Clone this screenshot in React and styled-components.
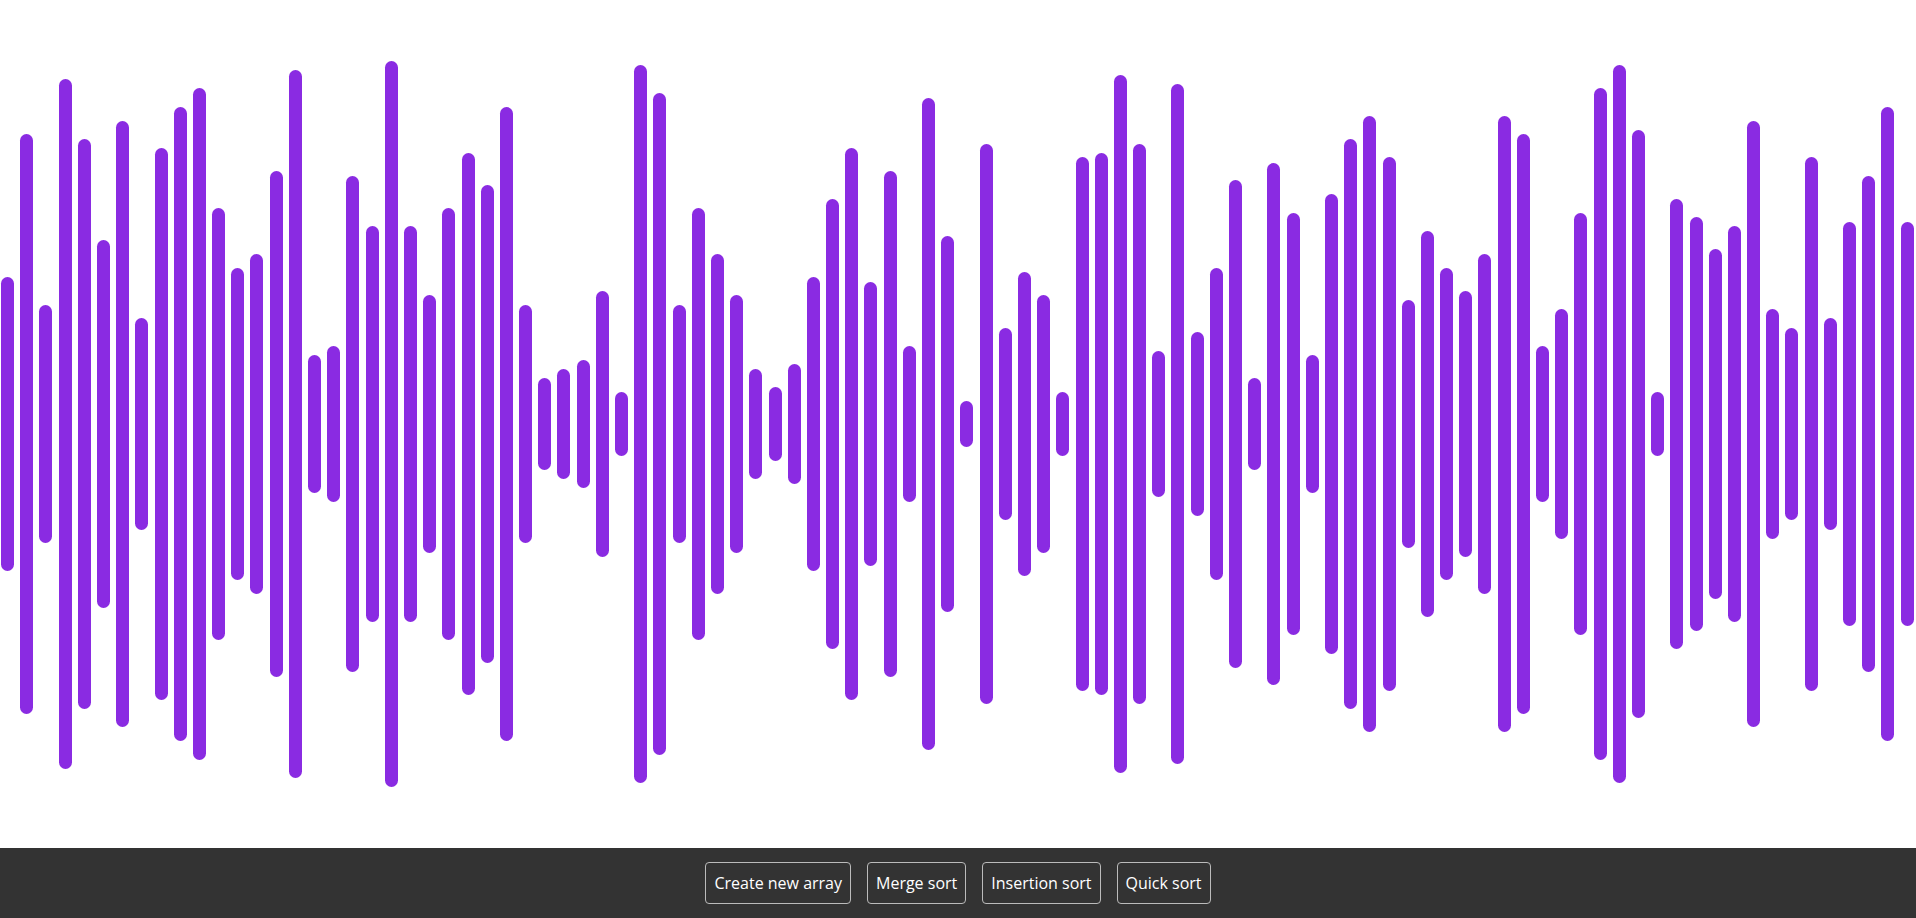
import React from 'react';
import styled, { createGlobalStyle } from 'styled-components';

const GlobalStyle = createGlobalStyle`
  html, body {
    margin: 0;
    padding: 0;
    background: #fff;
  }
  body {
    font-family: "Open Sans", "Liberation Sans", sans-serif;
  }
`;

// top edge of each bar (px from the top of the page); bars are centred at 424
const tops = [
  277, 134, 305, 79, 139, 240, 121, 318, 148, 107,
  88, 208, 268, 254, 171, 70, 355, 346, 176, 226,
  61, 226, 295, 208, 153, 185, 107, 305, 378, 369,
  360, 291, 392, 65, 93, 305, 208, 254, 295, 369,
  387, 364, 277, 199, 148, 282, 171, 346, 98, 236,
  401, 144, 328, 272, 295, 392, 157, 153, 75, 144,
  351, 84, 332, 268, 180, 378, 163, 213, 355, 194,
  139, 116, 157, 300, 231, 268, 291, 254, 116, 134,
  346, 309, 213, 88, 65, 130, 392, 199, 217, 249,
  226, 121, 309, 328, 157, 318, 222, 176, 107, 222,
];

const array = tops.map((t) => (424 - t) * 2);

const Page = styled.div`
  height: 100vh;
  display: flex;
  flex-direction: column;
`;

const Visualizer = styled.div`
  flex: 1;
  display: flex;
  justify-content: space-between;
  align-items: center;
  padding: 0 1px;
`;

const Bar = styled.div`
  width: 13px;
  background-color: #8a2be2;
  border-radius: 7px;
`;

const Toolbar = styled.div`
  height: 70px;
  background-color: #333;
  display: flex;
  justify-content: center;
  align-items: center;
  gap: 16px;
`;

const Button = styled.button`
  height: 42px;
  padding: 0 8px;
  background: transparent;
  color: #fff;
  border: 1px solid #bbb;
  border-radius: 4px;
  font-family: "Open Sans", "Liberation Sans", sans-serif;
  font-size: 16px;
  cursor: pointer;
`;

export default function App() {
  return (
    <Page>
      <GlobalStyle />
      <Visualizer>
        {array.map((value, idx) => (
          <Bar key={idx} style={{ height: `${value}px` }} />
        ))}
      </Visualizer>
      <Toolbar>
        <Button>Create new array</Button>
        <Button>Merge sort</Button>
        <Button>Insertion sort</Button>
        <Button>Quick sort</Button>
      </Toolbar>
    </Page>
  );
}
